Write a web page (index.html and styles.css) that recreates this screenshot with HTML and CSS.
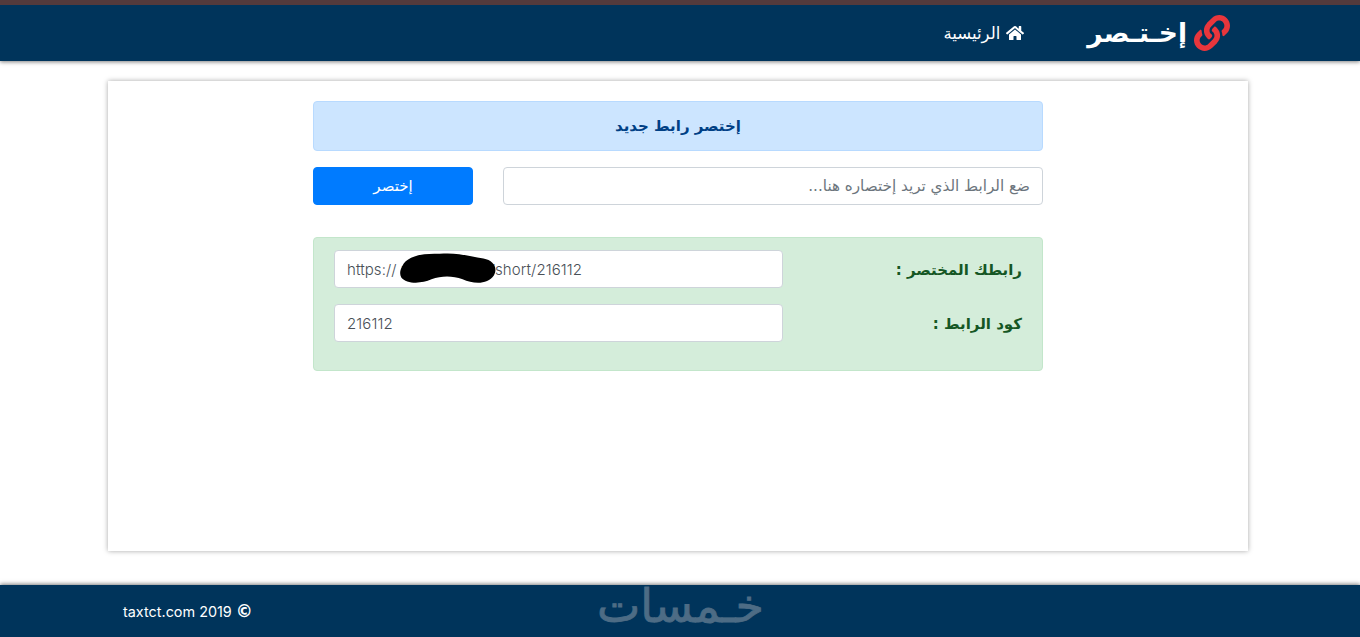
FILE: index.html
```html
<!DOCTYPE html>
<html lang="ar" dir="rtl">
<head>
  <meta charset="UTF-8" />
  <title>إختصر</title>
  <link rel="stylesheet" href="styles.css">
</head>
<body>
  <header class="navbar">
    <a class="brand" href="#">
      <svg class="brand-icon" viewBox="0 0 512 512"><path d="M326.612 185.391c59.747 59.809 58.927 155.698.36 214.59-.11.12-.24.25-.36.37l-67.2 67.2c-59.27 59.27-155.699 59.262-214.96 0-59.27-59.26-59.27-155.7 0-214.96l37.106-37.106c9.84-9.84 26.786-3.3 27.294 10.606.648 17.722 3.826 35.527 9.69 52.721 1.986 5.822.567 12.262-3.783 16.612l-13.087 13.087c-28.026 28.026-28.905 73.66-1.155 101.96 28.024 28.579 74.086 28.749 102.325.51l67.2-67.19c28.191-28.191 28.073-73.757 0-101.83-3.701-3.694-7.429-6.564-10.341-8.569a16.037 16.037 0 0 1-6.947-12.606c-.396-10.567 3.348-21.456 11.698-29.806l21.054-21.055c5.521-5.521 14.182-6.199 20.584-1.731a152.482 152.482 0 0 1 20.522 17.197zM467.547 44.449c-59.261-59.262-155.69-59.27-214.96 0l-67.2 67.2c-.12.12-.25.25-.36.37-58.566 58.892-59.387 154.781.36 214.59a152.454 152.454 0 0 0 20.521 17.196c6.402 4.468 15.064 3.789 20.584-1.731l21.054-21.055c8.35-8.35 12.094-19.239 11.698-29.806a16.037 16.037 0 0 0-6.947-12.606c-2.912-2.005-6.64-4.875-10.341-8.569-28.073-28.073-28.191-73.639 0-101.83l67.2-67.19c28.239-28.239 74.3-28.069 102.325.51 27.75 28.3 26.872 73.934-1.155 101.96l-13.087 13.087c-4.35 4.35-5.769 10.79-3.783 16.612 5.864 17.194 9.042 34.999 9.69 52.721.509 13.906 17.454 20.446 27.294 10.606l37.106-37.106c59.271-59.259 59.271-155.699.001-214.959z"/></svg>
      <span>إخـتـصر</span>
    </a>
    <a class="nav-link" href="#">
      <svg class="home-icon" viewBox="0 0 576 512"><path d="M280.37 148.26L96 300.11V464a16 16 0 0 0 16 16l112.06-.29a16 16 0 0 0 15.92-16V368a16 16 0 0 1 16-16h64a16 16 0 0 1 16 16v95.64a16 16 0 0 0 16 16.05L464 480a16 16 0 0 0 16-16V300L295.67 148.26a12.19 12.19 0 0 0-15.3 0zM571.6 251.47L488 182.56V44.05a12 12 0 0 0-12-12h-56a12 12 0 0 0-12 12v72.61L318.47 43a48 48 0 0 0-61 0L4.34 251.47a12 12 0 0 0-1.6 16.9l25.5 31A12 12 0 0 0 45.15 301l235.22-193.74a12.19 12.19 0 0 1 15.3 0L530.9 301a12 12 0 0 0 16.9-1.6l25.5-31a12 12 0 0 0-1.7-16.93z"/></svg>
      <span>الرئيسية</span>
    </a>
  </header>

  <main class="card">
    <div class="column">
      <div class="alert-info">إختصر رابط جديد</div>
      <form class="short-form">
        <input class="field url-field" type="text" placeholder="ضع الرابط الذي تريد إختصاره هنا...">
        <button class="btn" type="button">إختصر</button>
      </form>
      <div class="alert-success">
        <div class="result-row">
          <label class="result-label">رابطك المختصر :</label>
          <div class="result-value">
            <input class="field value-field" type="text" value="https://&nbsp;xxxxxxxxxxx/short/216112">
            <svg class="scribble" viewBox="0 0 100 36" preserveAspectRatio="none"><path d="M8 16 C12 6 26 2 44 3 C60 1 74 6 86 8 C96 10 100 18 96 26 C90 36 76 35 66 30 C56 26 46 26 36 30 C26 35 12 35 7 28 C5 24 6 20 8 16Z"/></svg>
          </div>
        </div>
        <div class="result-row">
          <label class="result-label">كود الرابط :</label>
          <div class="result-value">
            <input class="field value-field" type="text" value="216112">
          </div>
        </div>
      </div>
    </div>
  </main>

  <footer class="footer">
    <span class="watermark">خـمسات</span>
    <span class="copyright">taxtct.com 2019 <b>©</b></span>
  </footer>
</body>
</html>
```

FILE: styles.css
```css
* {
  box-sizing: border-box;
}
body {
  margin: 0;
  height: 637px;
  overflow: hidden;
  background: #fff;
  font-family: "DejaVu Sans", "Noto Sans", sans-serif;
  display: flex;
  flex-direction: column;
}
.navbar {
  height: 61px;
  flex: none;
  background: #00345b;
  border-top: 5px solid #533a3c;
  box-shadow: 0 1px 4px rgba(0, 0, 0, 0.5);
  display: flex;
  align-items: center;
  padding: 0 130px 0 0;
}
.brand {
  display: flex;
  align-items: center;
  gap: 7px;
  color: #fff;
  text-decoration: none;
  font-size: 26.5px;
  font-weight: bold;
  line-height: 1;
  margin-left: 63px;
}
.brand-icon {
  width: 36px;
  height: 36px;
  fill: #e8363c;
}
.nav-link {
  display: flex;
  align-items: center;
  gap: 6px;
  color: #fff;
  text-decoration: none;
  font-size: 16.5px;
}
.home-icon {
  width: 18px;
  height: 16px;
  fill: #fff;
}
.card {
  width: 1140px;
  height: 470px;
  flex: none;
  margin: 20px 112px 0 108px;
  background: #fff;
  box-shadow: 0 0 5px rgba(0, 0, 0, 0.35);
  padding-top: 20px;
}
.column {
  width: 730px;
  margin: 0 auto;
}
.alert-info {
  height: 50px;
  background: #cce5ff;
  border: 1px solid #b8daff;
  border-radius: 4px;
  color: #004085;
  font-size: 15px;
  font-weight: bold;
  display: flex;
  align-items: center;
  justify-content: center;
}
.short-form {
  display: flex;
  gap: 30px;
  margin-top: 16px;
}
.field {
  height: 38px;
  background: #fff;
  border: 1px solid #ced4da;
  border-radius: 4px;
  padding: 0 12px;
  color: #495057;
  font-family: inherit;
  font-size: 15.2px;
}
.url-field {
  width: 540px;
}
.url-field::placeholder {
  color: #6c757d;
}
.btn {
  width: 160px;
  height: 38px;
  background: #007bff;
  border: 1px solid #007bff;
  border-radius: 4px;
  color: #fff;
  font-family: inherit;
  font-size: 15px;
}
.alert-success {
  height: 134px;
  margin-top: 32px;
  background: #d4edda;
  border: 1px solid #c3e6cb;
  border-radius: 4px;
  padding: 12px 20px 0;
  display: flex;
  flex-direction: column;
  gap: 16px;
}
.result-row {
  display: flex;
  align-items: center;
  justify-content: space-between;
}
.result-label {
  color: #155724;
  font-size: 15px;
  font-weight: bold;
  margin-top: 2px;
}
.result-value {
  position: relative;
  width: 449px;
}
.value-field {
  width: 100%;
  direction: ltr;
  text-align: left;
  font-family: "Inter", sans-serif;
  font-size: 15px;
  font-weight: 300;
  letter-spacing: 0.1px;
}
.scribble {
  position: absolute;
  left: 60px;
  top: 1px;
  width: 104px;
  height: 34px;
}
.footer {
  height: 52px;
  flex: none;
  margin-top: 34px;
  background: #00345b;
  box-shadow: 0 -1px 4px rgba(0, 0, 0, 0.5);
  display: flex;
  align-items: center;
  padding: 0 110px 0 123px;
  position: relative;
}
.watermark {
  position: absolute;
  left: 597px;
  top: -1px;
  color: #4d6c85;
  font-size: 46px;
  line-height: 44px;
  -webkit-text-stroke: 0.8px #4d6c85;
}
.copyright {
  margin-right: auto;
  direction: ltr;
  color: #fff;
  font-family: "Inter", sans-serif;
  font-size: 14.4px;
}
.copyright b {
  font-family: "DejaVu Sans", sans-serif;
  font-size: 17px;
}
```
